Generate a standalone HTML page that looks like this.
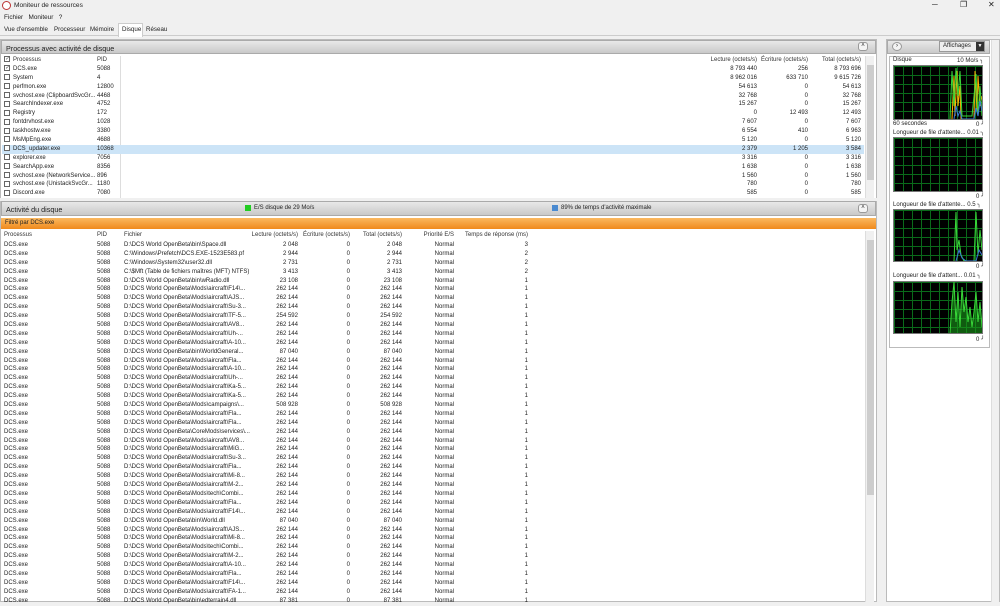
<!DOCTYPE html>
<html><head><meta charset="utf-8"><style>
*{box-sizing:border-box;margin:0;padding:0}
body{width:1000px;height:602px;overflow:hidden;background:#f0f0f0;font-family:"Liberation Sans",sans-serif;font-size:6px;color:#222;position:relative}
.a{position:absolute;white-space:nowrap}
.hdr{position:absolute;background:linear-gradient(#e8e8e8,#c9c9c9);border:1px solid #aaa;font-size:7.2px;color:#222;padding:3px 4px}
.btn{position:absolute;width:10px;height:9px;border:1px solid #999;border-radius:3px;background:#f4f4f4;font-size:6px;text-align:center;line-height:7px}
.r{position:relative;height:8.9px;line-height:8.9px}
.r span{position:absolute;top:0}
.cb{display:inline-block;width:6px;height:6px;border:1px solid #666;background:#fff;vertical-align:middle;margin-right:3px;font-size:5px;line-height:4px;text-align:center}
.sb{position:absolute;background:#f0f0f0;border-left:1px solid #ddd}
.g{position:absolute;background-color:#000;background-image:linear-gradient(90deg,#0a6a1a 1px,transparent 1px),linear-gradient(#0a6a1a 1px,transparent 1px);background-size:9px 9px;border:1px solid #777}
.tab{position:absolute;top:25px;font-size:6.2px;line-height:10px}
</style></head><body>
<div class="a" style="left:2px;top:1px;width:9px;height:9px;border:1px solid #b33;border-radius:50%;background:#fff"></div>
<div class="a" style="left:14px;top:2px;font-size:6.6px">Moniteur de ressources</div>
<div class="a" style="left:932px;top:0px;font-size:8px">─</div>
<div class="a" style="left:960px;top:0px;font-size:8px">❐</div>
<div class="a" style="left:988px;top:0px;font-size:8px">✕</div>
<div class="a" style="left:4px;top:14px;font-size:6.4px">Fichier&nbsp;&nbsp;&nbsp;Moniteur&nbsp;&nbsp;&nbsp;?</div>
<div class="a" style="left:0;top:24px;width:1000px;height:12px;border-bottom:1px solid #ccc"></div>
<div class="tab" style="left:4px">Vue d'ensemble</div>
<div class="tab" style="left:54px">Processeur</div>
<div class="tab" style="left:90px">Mémoire</div>
<div class="a" style="left:118px;top:23px;width:25px;height:14px;background:#fff;border:1px solid #ccc;border-bottom:none;font-size:6.2px;padding:2px 3px">Disque</div>
<div class="tab" style="left:146px">Réseau</div>
<div class="a" style="left:0;top:39px;width:877px;height:563px;background:#fff;border:1px solid #bbb"></div>
<div class="hdr" style="left:1px;top:40px;width:875px;height:14px">Processus avec activité de disque</div>
<div class="btn" style="left:858px;top:42px">˄</div>
<div class="a" style="left:120px;top:56px;width:1px;height:142px;background:#ddd"></div>
<div class="sb" style="left:865px;top:56px;width:9px;height:142px"><div style="position:absolute;left:1px;top:9px;width:7px;height:115px;background:#cdcdcd"></div></div>
<div class="a" style="left:2px;top:56px;width:862px">
<div class="r" style="color:#333"><span style="left:2px"><i class="cb">✓</i>Processus</span><span style="left:95px">PID</span><span style="right:107px">Lecture (octets/s)</span><span style="right:56px">Écriture (octets/s)</span><span style="right:3px">Total (octets/s)</span></div>
<div class="r"><span style="left:2px"><i class="cb">✓</i>DCS.exe</span><span style="left:95px">5088</span><span style="right:107px">8 793 440</span><span style="right:56px">256</span><span style="right:3px">8 793 696</span></div>
<div class="r"><span style="left:2px"><i class="cb"></i>System</span><span style="left:95px">4</span><span style="right:107px">8 962 016</span><span style="right:56px">633 710</span><span style="right:3px">9 615 726</span></div>
<div class="r"><span style="left:2px"><i class="cb"></i>perfmon.exe</span><span style="left:95px">12800</span><span style="right:107px">54 613</span><span style="right:56px">0</span><span style="right:3px">54 613</span></div>
<div class="r"><span style="left:2px"><i class="cb"></i>svchost.exe (ClipboardSvcGr...</span><span style="left:95px">4468</span><span style="right:107px">32 768</span><span style="right:56px">0</span><span style="right:3px">32 768</span></div>
<div class="r"><span style="left:2px"><i class="cb"></i>SearchIndexer.exe</span><span style="left:95px">4752</span><span style="right:107px">15 267</span><span style="right:56px">0</span><span style="right:3px">15 267</span></div>
<div class="r"><span style="left:2px"><i class="cb"></i>Registry</span><span style="left:95px">172</span><span style="right:107px">0</span><span style="right:56px">12 493</span><span style="right:3px">12 493</span></div>
<div class="r"><span style="left:2px"><i class="cb"></i>fontdrvhost.exe</span><span style="left:95px">1028</span><span style="right:107px">7 607</span><span style="right:56px">0</span><span style="right:3px">7 607</span></div>
<div class="r"><span style="left:2px"><i class="cb"></i>taskhostw.exe</span><span style="left:95px">3380</span><span style="right:107px">6 554</span><span style="right:56px">410</span><span style="right:3px">6 963</span></div>
<div class="r"><span style="left:2px"><i class="cb"></i>MsMpEng.exe</span><span style="left:95px">4688</span><span style="right:107px">5 120</span><span style="right:56px">0</span><span style="right:3px">5 120</span></div>
<div class="r" style="background:#cce4f7"><span style="left:2px"><i class="cb"></i>DCS_updater.exe</span><span style="left:95px">10368</span><span style="right:107px">2 379</span><span style="right:56px">1 205</span><span style="right:3px">3 584</span></div>
<div class="r"><span style="left:2px"><i class="cb"></i>explorer.exe</span><span style="left:95px">7056</span><span style="right:107px">3 316</span><span style="right:56px">0</span><span style="right:3px">3 316</span></div>
<div class="r"><span style="left:2px"><i class="cb"></i>SearchApp.exe</span><span style="left:95px">8356</span><span style="right:107px">1 638</span><span style="right:56px">0</span><span style="right:3px">1 638</span></div>
<div class="r"><span style="left:2px"><i class="cb"></i>svchost.exe (NetworkService...</span><span style="left:95px">896</span><span style="right:107px">1 560</span><span style="right:56px">0</span><span style="right:3px">1 560</span></div>
<div class="r"><span style="left:2px"><i class="cb"></i>svchost.exe (UnistackSvcGr...</span><span style="left:95px">1180</span><span style="right:107px">780</span><span style="right:56px">0</span><span style="right:3px">780</span></div>
<div class="r"><span style="left:2px"><i class="cb"></i>Discord.exe</span><span style="left:95px">7080</span><span style="right:107px">585</span><span style="right:56px">0</span><span style="right:3px">585</span></div>
</div>
<div class="a" style="left:0;top:198px;width:877px;height:3px;background:#f0f0f0"></div>
<div class="hdr" style="left:1px;top:201px;width:875px;height:15px">Activité du disque</div>
<div class="a" style="left:245px;top:205px;width:6px;height:6px;background:#2c2"></div>
<div class="a" style="left:254px;top:205px">E/S disque de 29 Mo/s</div>
<div class="a" style="left:552px;top:205px;width:6px;height:6px;background:#4a8ad0"></div>
<div class="a" style="left:561px;top:205px">89% de temps d'activité maximale</div>
<div class="btn" style="left:858px;top:204px">˄</div>
<div class="a" style="left:1px;top:218px;width:875px;height:11px;background:linear-gradient(#fbb860,#f08a1c);padding:2px 4px">Filtré par DCS.exe</div>
<div class="sb" style="left:865px;top:231px;width:9px;height:371px"><div style="position:absolute;left:1px;top:9px;width:7px;height:255px;background:#cdcdcd"></div></div>
<div class="a" style="left:2px;top:231px;width:560px">
<div class="r" style="color:#333"><span style="left:2px">Processus</span><span style="left:95px">PID</span><span style="left:122px">Fichier</span><span style="right:264px">Lecture (octets/s)</span><span style="right:212px">Écriture (octets/s)</span><span style="right:160px">Total (octets/s)</span><span style="right:108px">Priorité E/S</span><span style="right:34px">Temps de réponse (ms)</span></div>
</div>
<div class="a" style="left:2px;top:241px;width:560px">
<div class="r"><span style="left:2px">DCS.exe</span><span style="left:95px">5088</span><span style="left:122px">D:\DCS World OpenBeta\bin\Space.dll</span><span style="right:264px">2 048</span><span style="right:212px">0</span><span style="right:160px">2 048</span><span style="right:108px">Normal</span><span style="right:34px">3</span></div>
<div class="r"><span style="left:2px">DCS.exe</span><span style="left:95px">5088</span><span style="left:122px">C:\Windows\Prefetch\DCS.EXE-1523E583.pf</span><span style="right:264px">2 944</span><span style="right:212px">0</span><span style="right:160px">2 944</span><span style="right:108px">Normal</span><span style="right:34px">2</span></div>
<div class="r"><span style="left:2px">DCS.exe</span><span style="left:95px">5088</span><span style="left:122px">C:\Windows\System32\user32.dll</span><span style="right:264px">2 731</span><span style="right:212px">0</span><span style="right:160px">2 731</span><span style="right:108px">Normal</span><span style="right:34px">2</span></div>
<div class="r"><span style="left:2px">DCS.exe</span><span style="left:95px">5088</span><span style="left:122px">C:\$Mft (Table de fichiers maîtres (MFT) NTFS)</span><span style="right:264px">3 413</span><span style="right:212px">0</span><span style="right:160px">3 413</span><span style="right:108px">Normal</span><span style="right:34px">2</span></div>
<div class="r"><span style="left:2px">DCS.exe</span><span style="left:95px">5088</span><span style="left:122px">D:\DCS World OpenBeta\bin\wRadio.dll</span><span style="right:264px">23 108</span><span style="right:212px">0</span><span style="right:160px">23 108</span><span style="right:108px">Normal</span><span style="right:34px">1</span></div>
<div class="r"><span style="left:2px">DCS.exe</span><span style="left:95px">5088</span><span style="left:122px">D:\DCS World OpenBeta\Mods\aircraft\F14\...</span><span style="right:264px">262 144</span><span style="right:212px">0</span><span style="right:160px">262 144</span><span style="right:108px">Normal</span><span style="right:34px">1</span></div>
<div class="r"><span style="left:2px">DCS.exe</span><span style="left:95px">5088</span><span style="left:122px">D:\DCS World OpenBeta\Mods\aircraft\AJS...</span><span style="right:264px">262 144</span><span style="right:212px">0</span><span style="right:160px">262 144</span><span style="right:108px">Normal</span><span style="right:34px">1</span></div>
<div class="r"><span style="left:2px">DCS.exe</span><span style="left:95px">5088</span><span style="left:122px">D:\DCS World OpenBeta\Mods\aircraft\Su-3...</span><span style="right:264px">262 144</span><span style="right:212px">0</span><span style="right:160px">262 144</span><span style="right:108px">Normal</span><span style="right:34px">1</span></div>
<div class="r"><span style="left:2px">DCS.exe</span><span style="left:95px">5088</span><span style="left:122px">D:\DCS World OpenBeta\Mods\aircraft\TF-5...</span><span style="right:264px">254 592</span><span style="right:212px">0</span><span style="right:160px">254 592</span><span style="right:108px">Normal</span><span style="right:34px">1</span></div>
<div class="r"><span style="left:2px">DCS.exe</span><span style="left:95px">5088</span><span style="left:122px">D:\DCS World OpenBeta\Mods\aircraft\AV8...</span><span style="right:264px">262 144</span><span style="right:212px">0</span><span style="right:160px">262 144</span><span style="right:108px">Normal</span><span style="right:34px">1</span></div>
<div class="r"><span style="left:2px">DCS.exe</span><span style="left:95px">5088</span><span style="left:122px">D:\DCS World OpenBeta\Mods\aircraft\Uh-...</span><span style="right:264px">262 144</span><span style="right:212px">0</span><span style="right:160px">262 144</span><span style="right:108px">Normal</span><span style="right:34px">1</span></div>
<div class="r"><span style="left:2px">DCS.exe</span><span style="left:95px">5088</span><span style="left:122px">D:\DCS World OpenBeta\Mods\aircraft\A-10...</span><span style="right:264px">262 144</span><span style="right:212px">0</span><span style="right:160px">262 144</span><span style="right:108px">Normal</span><span style="right:34px">1</span></div>
<div class="r"><span style="left:2px">DCS.exe</span><span style="left:95px">5088</span><span style="left:122px">D:\DCS World OpenBeta\bin\WorldGeneral...</span><span style="right:264px">87 040</span><span style="right:212px">0</span><span style="right:160px">87 040</span><span style="right:108px">Normal</span><span style="right:34px">1</span></div>
<div class="r"><span style="left:2px">DCS.exe</span><span style="left:95px">5088</span><span style="left:122px">D:\DCS World OpenBeta\Mods\aircraft\Fla...</span><span style="right:264px">262 144</span><span style="right:212px">0</span><span style="right:160px">262 144</span><span style="right:108px">Normal</span><span style="right:34px">1</span></div>
<div class="r"><span style="left:2px">DCS.exe</span><span style="left:95px">5088</span><span style="left:122px">D:\DCS World OpenBeta\Mods\aircraft\A-10...</span><span style="right:264px">262 144</span><span style="right:212px">0</span><span style="right:160px">262 144</span><span style="right:108px">Normal</span><span style="right:34px">1</span></div>
<div class="r"><span style="left:2px">DCS.exe</span><span style="left:95px">5088</span><span style="left:122px">D:\DCS World OpenBeta\Mods\aircraft\Uh-...</span><span style="right:264px">262 144</span><span style="right:212px">0</span><span style="right:160px">262 144</span><span style="right:108px">Normal</span><span style="right:34px">1</span></div>
<div class="r"><span style="left:2px">DCS.exe</span><span style="left:95px">5088</span><span style="left:122px">D:\DCS World OpenBeta\Mods\aircraft\Ka-5...</span><span style="right:264px">262 144</span><span style="right:212px">0</span><span style="right:160px">262 144</span><span style="right:108px">Normal</span><span style="right:34px">1</span></div>
<div class="r"><span style="left:2px">DCS.exe</span><span style="left:95px">5088</span><span style="left:122px">D:\DCS World OpenBeta\Mods\aircraft\Ka-5...</span><span style="right:264px">262 144</span><span style="right:212px">0</span><span style="right:160px">262 144</span><span style="right:108px">Normal</span><span style="right:34px">1</span></div>
<div class="r"><span style="left:2px">DCS.exe</span><span style="left:95px">5088</span><span style="left:122px">D:\DCS World OpenBeta\Mods\campaigns\...</span><span style="right:264px">508 928</span><span style="right:212px">0</span><span style="right:160px">508 928</span><span style="right:108px">Normal</span><span style="right:34px">1</span></div>
<div class="r"><span style="left:2px">DCS.exe</span><span style="left:95px">5088</span><span style="left:122px">D:\DCS World OpenBeta\Mods\aircraft\Fla...</span><span style="right:264px">262 144</span><span style="right:212px">0</span><span style="right:160px">262 144</span><span style="right:108px">Normal</span><span style="right:34px">1</span></div>
<div class="r"><span style="left:2px">DCS.exe</span><span style="left:95px">5088</span><span style="left:122px">D:\DCS World OpenBeta\Mods\aircraft\Fla...</span><span style="right:264px">262 144</span><span style="right:212px">0</span><span style="right:160px">262 144</span><span style="right:108px">Normal</span><span style="right:34px">1</span></div>
<div class="r"><span style="left:2px">DCS.exe</span><span style="left:95px">5088</span><span style="left:122px">D:\DCS World OpenBeta\CoreMods\services\...</span><span style="right:264px">262 144</span><span style="right:212px">0</span><span style="right:160px">262 144</span><span style="right:108px">Normal</span><span style="right:34px">1</span></div>
<div class="r"><span style="left:2px">DCS.exe</span><span style="left:95px">5088</span><span style="left:122px">D:\DCS World OpenBeta\Mods\aircraft\AV8...</span><span style="right:264px">262 144</span><span style="right:212px">0</span><span style="right:160px">262 144</span><span style="right:108px">Normal</span><span style="right:34px">1</span></div>
<div class="r"><span style="left:2px">DCS.exe</span><span style="left:95px">5088</span><span style="left:122px">D:\DCS World OpenBeta\Mods\aircraft\MiG...</span><span style="right:264px">262 144</span><span style="right:212px">0</span><span style="right:160px">262 144</span><span style="right:108px">Normal</span><span style="right:34px">1</span></div>
<div class="r"><span style="left:2px">DCS.exe</span><span style="left:95px">5088</span><span style="left:122px">D:\DCS World OpenBeta\Mods\aircraft\Su-3...</span><span style="right:264px">262 144</span><span style="right:212px">0</span><span style="right:160px">262 144</span><span style="right:108px">Normal</span><span style="right:34px">1</span></div>
<div class="r"><span style="left:2px">DCS.exe</span><span style="left:95px">5088</span><span style="left:122px">D:\DCS World OpenBeta\Mods\aircraft\Fla...</span><span style="right:264px">262 144</span><span style="right:212px">0</span><span style="right:160px">262 144</span><span style="right:108px">Normal</span><span style="right:34px">1</span></div>
<div class="r"><span style="left:2px">DCS.exe</span><span style="left:95px">5088</span><span style="left:122px">D:\DCS World OpenBeta\Mods\aircraft\Mi-8...</span><span style="right:264px">262 144</span><span style="right:212px">0</span><span style="right:160px">262 144</span><span style="right:108px">Normal</span><span style="right:34px">1</span></div>
<div class="r"><span style="left:2px">DCS.exe</span><span style="left:95px">5088</span><span style="left:122px">D:\DCS World OpenBeta\Mods\aircraft\M-2...</span><span style="right:264px">262 144</span><span style="right:212px">0</span><span style="right:160px">262 144</span><span style="right:108px">Normal</span><span style="right:34px">1</span></div>
<div class="r"><span style="left:2px">DCS.exe</span><span style="left:95px">5088</span><span style="left:122px">D:\DCS World OpenBeta\Mods\tech\Combi...</span><span style="right:264px">262 144</span><span style="right:212px">0</span><span style="right:160px">262 144</span><span style="right:108px">Normal</span><span style="right:34px">1</span></div>
<div class="r"><span style="left:2px">DCS.exe</span><span style="left:95px">5088</span><span style="left:122px">D:\DCS World OpenBeta\Mods\aircraft\Fla...</span><span style="right:264px">262 144</span><span style="right:212px">0</span><span style="right:160px">262 144</span><span style="right:108px">Normal</span><span style="right:34px">1</span></div>
<div class="r"><span style="left:2px">DCS.exe</span><span style="left:95px">5088</span><span style="left:122px">D:\DCS World OpenBeta\Mods\aircraft\F14\...</span><span style="right:264px">262 144</span><span style="right:212px">0</span><span style="right:160px">262 144</span><span style="right:108px">Normal</span><span style="right:34px">1</span></div>
<div class="r"><span style="left:2px">DCS.exe</span><span style="left:95px">5088</span><span style="left:122px">D:\DCS World OpenBeta\bin\World.dll</span><span style="right:264px">87 040</span><span style="right:212px">0</span><span style="right:160px">87 040</span><span style="right:108px">Normal</span><span style="right:34px">1</span></div>
<div class="r"><span style="left:2px">DCS.exe</span><span style="left:95px">5088</span><span style="left:122px">D:\DCS World OpenBeta\Mods\aircraft\AJS...</span><span style="right:264px">262 144</span><span style="right:212px">0</span><span style="right:160px">262 144</span><span style="right:108px">Normal</span><span style="right:34px">1</span></div>
<div class="r"><span style="left:2px">DCS.exe</span><span style="left:95px">5088</span><span style="left:122px">D:\DCS World OpenBeta\Mods\aircraft\Mi-8...</span><span style="right:264px">262 144</span><span style="right:212px">0</span><span style="right:160px">262 144</span><span style="right:108px">Normal</span><span style="right:34px">1</span></div>
<div class="r"><span style="left:2px">DCS.exe</span><span style="left:95px">5088</span><span style="left:122px">D:\DCS World OpenBeta\Mods\tech\Combi...</span><span style="right:264px">262 144</span><span style="right:212px">0</span><span style="right:160px">262 144</span><span style="right:108px">Normal</span><span style="right:34px">1</span></div>
<div class="r"><span style="left:2px">DCS.exe</span><span style="left:95px">5088</span><span style="left:122px">D:\DCS World OpenBeta\Mods\aircraft\M-2...</span><span style="right:264px">262 144</span><span style="right:212px">0</span><span style="right:160px">262 144</span><span style="right:108px">Normal</span><span style="right:34px">1</span></div>
<div class="r"><span style="left:2px">DCS.exe</span><span style="left:95px">5088</span><span style="left:122px">D:\DCS World OpenBeta\Mods\aircraft\A-10...</span><span style="right:264px">262 144</span><span style="right:212px">0</span><span style="right:160px">262 144</span><span style="right:108px">Normal</span><span style="right:34px">1</span></div>
<div class="r"><span style="left:2px">DCS.exe</span><span style="left:95px">5088</span><span style="left:122px">D:\DCS World OpenBeta\Mods\aircraft\Fla...</span><span style="right:264px">262 144</span><span style="right:212px">0</span><span style="right:160px">262 144</span><span style="right:108px">Normal</span><span style="right:34px">1</span></div>
<div class="r"><span style="left:2px">DCS.exe</span><span style="left:95px">5088</span><span style="left:122px">D:\DCS World OpenBeta\Mods\aircraft\F14\...</span><span style="right:264px">262 144</span><span style="right:212px">0</span><span style="right:160px">262 144</span><span style="right:108px">Normal</span><span style="right:34px">1</span></div>
<div class="r"><span style="left:2px">DCS.exe</span><span style="left:95px">5088</span><span style="left:122px">D:\DCS World OpenBeta\Mods\aircraft\FA-1...</span><span style="right:264px">262 144</span><span style="right:212px">0</span><span style="right:160px">262 144</span><span style="right:108px">Normal</span><span style="right:34px">1</span></div>
<div class="r"><span style="left:2px">DCS.exe</span><span style="left:95px">5088</span><span style="left:122px">D:\DCS World OpenBeta\bin\edterrain4.dll</span><span style="right:264px">87 381</span><span style="right:212px">0</span><span style="right:160px">87 381</span><span style="right:108px">Normal</span><span style="right:34px">1</span></div>
</div>
<div class="a" style="left:880px;top:39px;width:6px;height:563px;background:#f0f0f0"></div>
<div class="a" style="left:886px;top:39px;width:114px;height:563px;background:#fff;border:1px solid #bbb"></div>
<div class="hdr" style="left:887px;top:40px;width:103px;height:14px"></div>
<div class="btn" style="left:892px;top:42px;border-radius:50%">›</div>
<div class="a" style="left:939px;top:41px;width:46px;height:11px;border:1px solid #999;background:#eee;line-height:9px;padding-left:3px">Affichages</div>
<div class="a" style="left:976px;top:42px;width:8px;height:9px;background:#333;color:#fff;font-size:5px;text-align:center;line-height:9px">▼</div>
<div class="sb" style="left:991px;top:40px;width:8px;height:562px"></div>
<div class="a" style="left:889px;top:56px;width:101px;height:292px;border:1px solid #bbb"></div>
<div class="a" style="left:893px;top:57px">Disque</div><div class="a" style="left:957px;top:57px">10 Mo/s ╮</div>
<div class="g" style="left:893px;top:65px;width:90px;height:55px"><svg width="88" height="53" style="position:absolute;left:0;top:0"><polyline fill="none" stroke="#ffb000" stroke-width="1" points="58,53 60,10 61,50 63,5 64,40 66,20 67,53 80,53 81,5 83,45 84,10 86,40 88,30"/><polyline fill="none" stroke="#39d839" stroke-width="1" points="56,53 58,5 60,40 62,2 64,30 66,5 68,50 78,50 80,30 82,8 84,50 86,20 88,50"/><polyline fill="none" stroke="#3a7ad8" stroke-width="1" points="60,53 62,40 64,50 66,45 68,53 80,53 82,42 84,50 86,35 88,45"/></svg></div>
<div class="a" style="left:893px;top:121px">60 secondes</div><div class="a" style="left:976px;top:121px">0 ╯</div>
<div class="a" style="left:893px;top:129px">Longueur de file d'attente... 0.01 ╮</div>
<div class="g" style="left:893px;top:137px;width:90px;height:55px"></div>
<div class="a" style="left:976px;top:193px">0 ╯</div>
<div class="a" style="left:893px;top:201px">Longueur de file d'attente... 0.5 ╮</div>
<div class="g" style="left:893px;top:209px;width:90px;height:53px"><svg width="88" height="51" style="position:absolute"><polyline fill="none" stroke="#39d839" points="60,51 62,2 63,40 65,30 67,45 70,51 80,51 82,2 84,45 86,20 88,40"/><polyline fill="none" stroke="#3a7ad8" points="62,51 65,40 68,48 72,51 82,51 85,40 88,45"/></svg></div>
<div class="a" style="left:976px;top:263px">0 ╯</div>
<div class="a" style="left:893px;top:272px">Longueur de file d'attent... 0.01 ╮</div>
<div class="g" style="left:893px;top:281px;width:90px;height:53px"><svg width="88" height="51" style="position:absolute"><polygon fill="#1a9a1a" opacity="0.6" points="56,51 58,20 60,0 62,40 64,10 66,45 68,5 70,30 72,15 74,40 76,25 78,45 80,30 82,10 84,40 86,20 88,45 88,51"/><polyline fill="none" stroke="#39d839" points="56,51 58,20 60,0 62,40 64,10 66,45 68,5 70,30 72,15 74,40 76,25 78,45 80,30 82,10 84,40 86,20 88,45"/></svg></div>
<div class="a" style="left:976px;top:336px">0 ╯</div>
</body></html>
